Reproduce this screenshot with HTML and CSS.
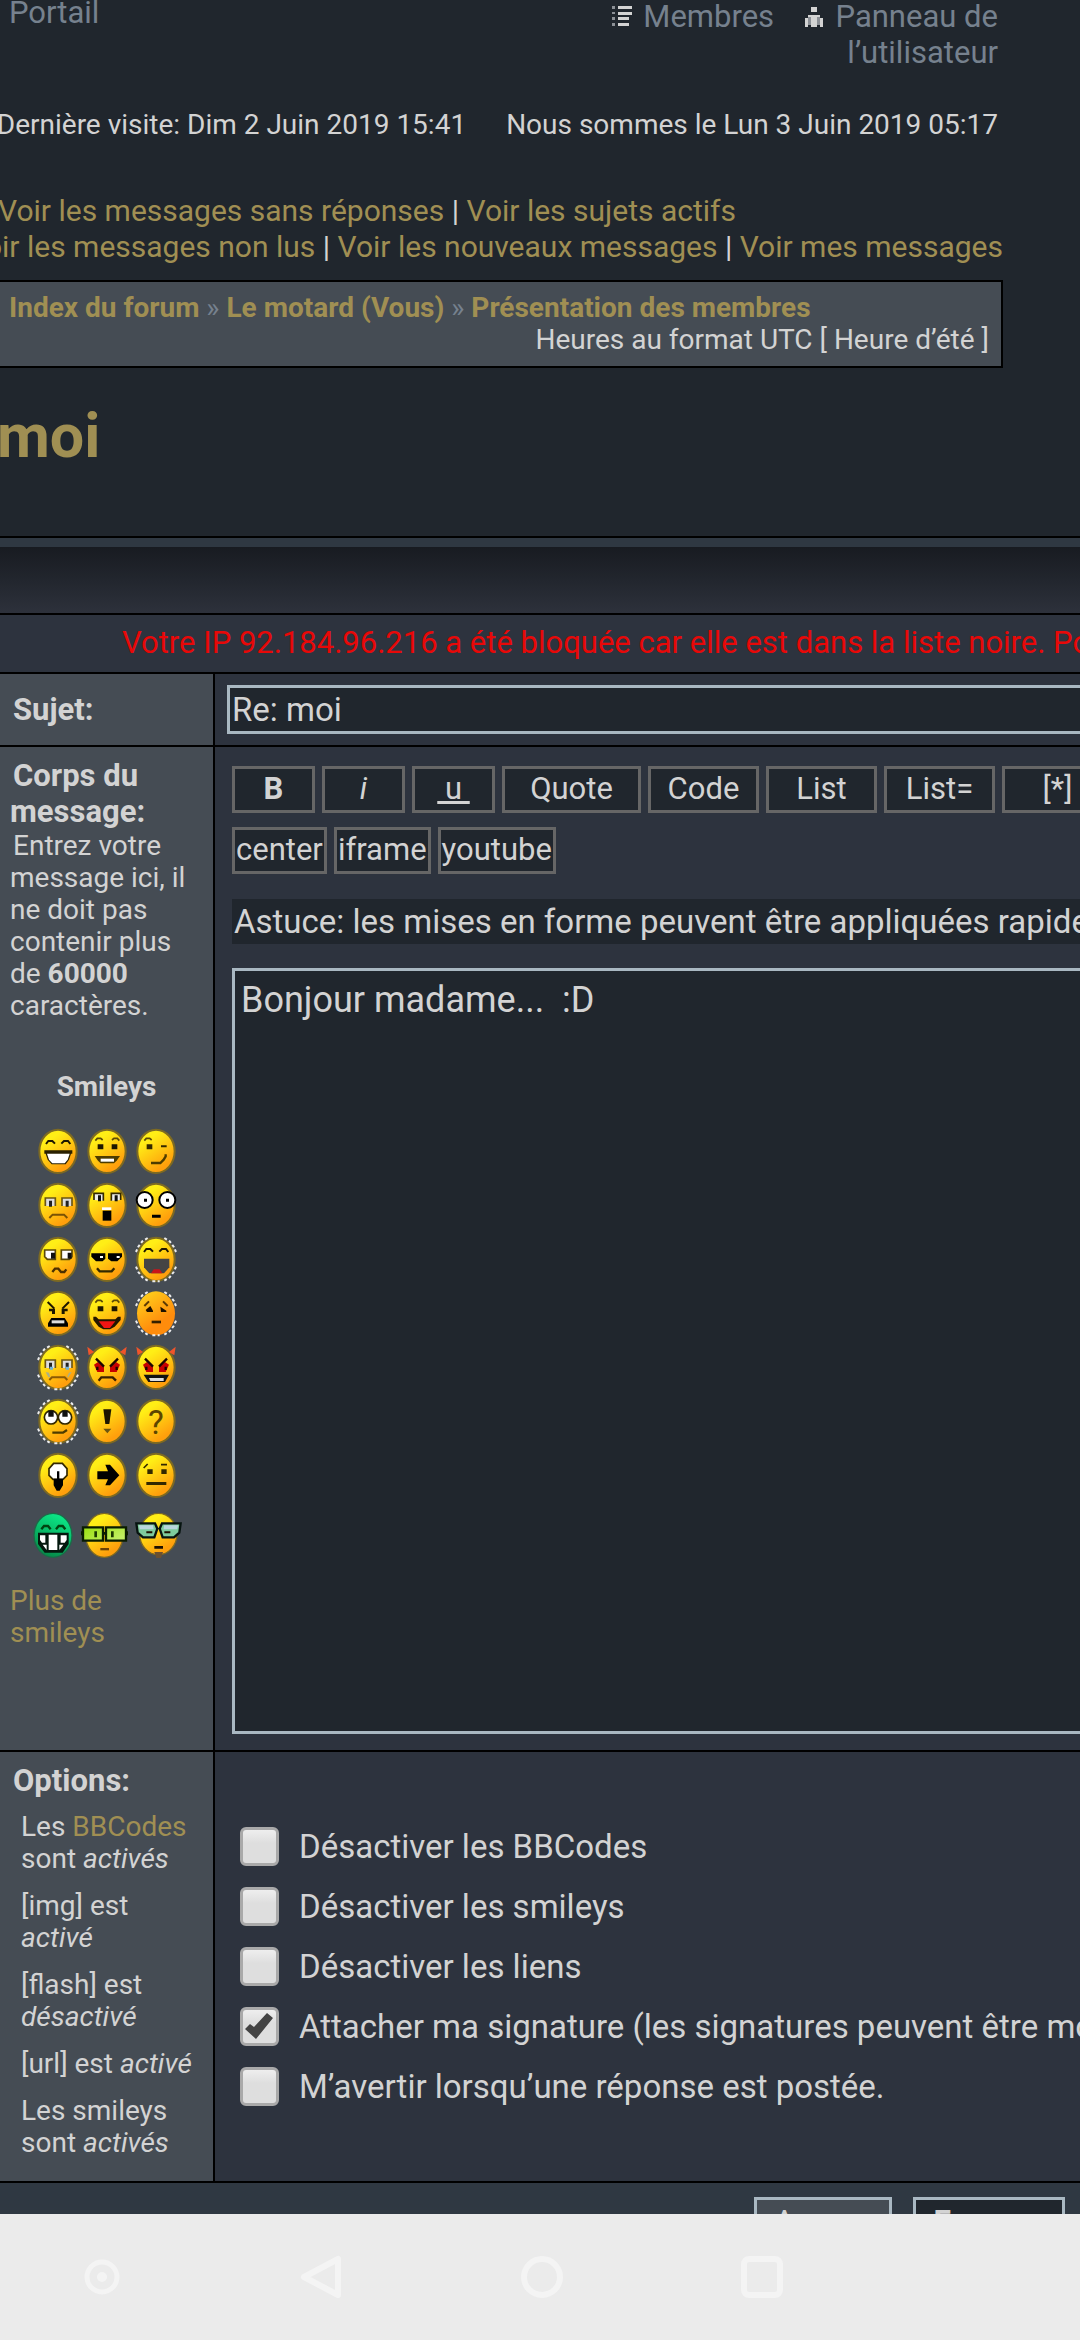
FILE: index.html
```
<!DOCTYPE html>
<html lang="fr">
	<head>
		<meta charset="utf-8">
		<meta name="viewport" content="width=device-width, initial-scale=1">
		<title>Répondre - moi</title>
		<link rel="stylesheet" href="styles.css">
	</head>
	<body>
		<!-- shared shapes for the smileys -->
		<svg class="defs" aria-hidden="true">
			<defs>
				<linearGradient id="skin" x1="0.2" y1="0" x2="0.8" y2="1">
					<stop offset="0.2" stop-color="#ffee16"/>
					<stop offset="0.85" stop-color="#ff9f0c"/>
				</linearGradient>
				<linearGradient id="sad" x1="0.2" y1="0" x2="0.8" y2="1">
					<stop offset="0" stop-color="#ffd21c"/>
					<stop offset="0.7" stop-color="#ff8c0c"/>
				</linearGradient>
				<linearGradient id="green" x1="0.8" y1="0" x2="0.4" y2="1">
					<stop offset="0" stop-color="#0cef8c"/>
					<stop offset="1" stop-color="#058a48"/>
				</linearGradient>
				<linearGradient id="lens" x1="0" y1="0" x2="1" y2="0.6">
					<stop offset="0" stop-color="#9adf10"/>
					<stop offset="1" stop-color="#c2ef62"/>
				</linearGradient>
				<g id="face">
					<ellipse cx="63" cy="70" rx="56" ry="65" fill="url(#skin)" stroke="#7d6a22" stroke-width="6"/>
				</g>
				<g id="halo">
					<path d="M38 6L22 16 10 32 3 48M88 6l16 10 12 16 7 16M3 92l7 16 12 16 16 10M123 92l-7 16-12 16-16 10M52 136h22" fill="none" stroke="#eee" stroke-width="6" stroke-dasharray="9 7"/>
				</g>
				<g id="brows" fill="none" stroke="#5c4a06" stroke-width="5">
					<path d="M28 38l6-7h10l6 5M78 36l6-5h10l6 7"/>
				</g>
				<g id="eyes" fill="#1d1600">
					<path d="M35 49h17v15h-17zM77 49h17v15h-17z"/>
				</g>
				<g id="arcs" fill="none" stroke="#1d1600" stroke-width="6">
					<path d="M27 48l7-9h12l8 8M73 47l8-8h12l7 9"/>
				</g>
				<g id="specs">
					<path d="M25 72V48h30v24M75 72V48h30v24" fill="#ddd" stroke="#6b5512" stroke-width="5"/>
					<path d="M36 56h9v18h-9zM86 56h9v18h-9z" fill="#222"/>
				</g>
				<g id="devil">
					<path d="M8 34L4 8l20 16zM118 34l4-26-20 16z" fill="#f0542a"/>
					<path d="M24 62l12-8 18 16v14H34zM102 62l-12-8-18 16v14h20z" fill="#c80000"/>
					<path d="M30 44l24 24M96 44L72 68M34 68v10M92 68v10" stroke="#1d0600" stroke-width="7"/>
				</g>
			</defs>
		</svg>

		<div id="page">
			<div id="header">
				<div class="menu">
					<a class="portal" href="#">Portail</a>
					<div class="user">
						<a href="#"><svg class="icon" viewBox="0 0 20 22"><path d="M0 1h3v3H0zM0 7h3v2H0zM0 12h3v3H0zM0 18h3v3H0z" fill="#8c9096"/><path d="M6 1h14v3H6zM6 7h14v3H6zM6 12h11v3H6zM6 18h11v3H6z" fill="#d3d3d3"/></svg> Membres</a>
						<a class="panel" href="#"><svg class="icon" viewBox="0 0 20 22"><path d="M7 2h6v5H7zM4 10h12v2H4zM1 13h3v9H1zM16 13h3v9h-3zM7 12h6v10H7z" fill="#d3d3d3"/><path d="M4 12h3v8H4zM13 12h3v8h-3z" fill="#8c9096"/></svg> Panneau de l’utilisateur</a>
					</div>
				</div>
				<div class="dates">
					<span>Dernière visite: Dim 2 Juin 2019 15:41</span>
					<span>Nous sommes le Lun 3 Juin 2019 05:17</span>
				</div>
				<div class="search">
					<div><a href="#">Voir les messages sans réponses</a> | <a href="#">Voir les sujets actifs</a></div>
					<div class="right"><a href="#">Voir les messages non lus</a> | <a href="#">Voir les nouveaux messages</a> | <a href="#">Voir mes messages</a></div>
				</div>
				<div class="breadcrumbs">
					<div class="path"><a href="#">Index du forum</a> » <a href="#">Le motard (Vous)</a> » <a href="#">Présentation des membres</a></div>
					<div class="timezone">Heures au format UTC [ Heure d’été ]</div>
				</div>
				<h2><a href="#">moi</a></h2>
			</div>

			<form id="postform" action="#" method="post">
				<div class="cap"></div>
				<div class="error">Votre IP 92.184.96.216 a été bloquée car elle est dans la liste noire. Pour</div>

				<div class="row">
					<div class="row1 middle"><label class="title" for="subject">Sujet:</label></div>
					<div class="row2 subject"><input id="subject" type="text" value="Re: moi"></div>
				</div>

				<div class="row">
					<div class="row1">
						<label class="title" for="message">Corps du message:</label>
						<div class="explain">Entrez votre message ici, il ne doit pas contenir plus de <b>60000</b> caractères.</div>
						<div class="smileys">
							<b>Smileys</b>
							<div class="line">
								<svg viewBox="0 0 126 141"><use href="#face"/><use href="#arcs"/><path d="M22 67h84v10h-4l-6 18-10 14H44L32 95l-6-18h-4z" fill="#2a2000"/><path d="M30 77h68l-6 18-9 11H46l-10-11z" fill="#fff"/></svg>
								<svg viewBox="0 0 126 141"><use href="#face"/><use href="#brows"/><use href="#eyes"/><path d="M26 84h76l-10 14-8 8H44l-8-8z" fill="#4d3c00"/><path d="M44 92h40v9H44z" fill="#fff"/></svg>
								<svg viewBox="0 0 126 141"><use href="#face"/><path d="M28 38l6-7h10l6 5" fill="none" stroke="#5c4a06" stroke-width="5"/><path d="M35 49h17v15H35zM78 52h17v6H78z" fill="#332800"/><path d="M48 105h28l10-10 6-10v-6" fill="none" stroke="#4d3c00" stroke-width="7"/></svg>
							</div>
							<div class="line">
								<svg viewBox="0 0 126 141"><use href="#face"/><use href="#specs"/><path d="M37 108l10-10h34l10 10" fill="none" stroke="#7a5205" stroke-width="6"/></svg>
								<svg viewBox="0 0 126 141"><use href="#face"/><path d="M24 54V34h28v22M76 56V34h28v20" fill="#eee" stroke="#332800" stroke-width="5"/><path d="M36 40h9v18h-9zM86 40h9v18h-9z" fill="#111"/><path d="M48 76h28v8H48z" fill="#fff"/><path d="M50 86h26v30H50z" fill="#000"/></svg>
								<svg viewBox="0 0 126 141"><use href="#face"/><circle cx="29" cy="54" r="24" fill="#fff" stroke="#000" stroke-width="6"/><circle cx="97" cy="54" r="24" fill="#fff" stroke="#000" stroke-width="6"/><path d="M27 50h9v9h-9zM93 50h9v9h-9zM51 98h26v9H51z" fill="#000"/></svg>
							</div>
							<div class="line">
								<svg viewBox="0 0 126 141"><use href="#face"/><path d="M23 42h32v28H31l-8-8zM73 42h32v20l-8 8H73z" fill="#fff" stroke="#5c4a06" stroke-width="5"/><path d="M42 50h12v18H42zM92 50h12v18H92z" fill="#111"/><path d="M46 108l8-10h10l8 10h10l6-8" fill="none" stroke="#4d3000" stroke-width="7"/></svg>
								<svg viewBox="0 0 126 141"><use href="#face"/><path d="M16 52h42v16l-8 8H30L16 62zM66 52h42v10L94 76H76l-10-8z" fill="#000"/><path d="M42 60h9v6h-9zM92 60h9v6h-9z" fill="#fff"/><path d="M33 97l8 9h36l8-9" fill="none" stroke="#332800" stroke-width="7"/></svg>
								<svg viewBox="0 0 126 141"><use href="#face"/><use href="#halo"/><use href="#arcs"/><path d="M27 68h76v26l-16 18H43L27 94z" fill="#444"/><path d="M48 112l8-12h18l8 12z" fill="#c8141a"/></svg>
							</div>
							<div class="line">
								<svg viewBox="0 0 126 141"><use href="#face"/><path d="M32 36l20 20M96 36L76 56" stroke="#1d1600" stroke-width="6"/><path d="M36 56h18v16h-9v-8h-9zM74 56h18v8h-9v8h-9z" fill="#1d1600"/><path d="M43 84h40l10 16v10H33v-10z" fill="#000"/><path d="M44 91h38v9H44z" fill="#ddd"/></svg>
								<svg viewBox="0 0 126 141"><use href="#face"/><use href="#brows"/><use href="#eyes"/><path d="M22 80h8l8 8h50l8-8h8v10l-18 20-14 8H52l-14-8-16-20z" fill="#221600"/><path d="M38 94h50l-16 20H54z" fill="#f01414"/></svg>
								<svg viewBox="0 0 126 141"><ellipse cx="63" cy="70" rx="57" ry="66" fill="url(#sad)"/><use href="#halo"/><path d="M28 48l14-14M84 34l14 14" stroke="#5c3a06" stroke-width="6"/><path d="M32 60l14-12 8 14v4H36zM76 50l18 12v4H78z" fill="#1d1000"/><path d="M50 92h28v8H50z" fill="#332000"/></svg>
							</div>
							<div class="line">
								<svg viewBox="0 0 126 141"><use href="#face"/><use href="#halo"/><use href="#specs"/><path d="M38 68h10v9H38zM86 68h10v9H86z" fill="#6fb2d6"/><path d="M26 84l8 16h6l-4-14zM104 84l-10 16h-4l6-14z" fill="#a9b08a"/><path d="M37 108l8-8h38l8 8" fill="none" stroke="#8a5a05" stroke-width="6"/></svg>
								<svg viewBox="0 0 126 141"><use href="#face"/><use href="#devil"/><path d="M38 110l8-10h34l10 10" fill="none" stroke="#3a2000" stroke-width="7"/></svg>
								<svg viewBox="0 0 126 141"><use href="#face"/><use href="#devil"/><path d="M26 92h76l-12 22H40z" fill="#111"/><path d="M42 102h44v9H46z" fill="#ddd"/></svg>
							</div>
							<div class="line">
								<svg viewBox="0 0 126 141"><use href="#face"/><use href="#halo"/><circle cx="42" cy="58" r="20" fill="#fff" stroke="#332800" stroke-width="5"/><circle cx="84" cy="58" r="20" fill="#fff" stroke="#332800" stroke-width="5"/><path d="M34 38h16v18H34zM76 38h16v18H76z" fill="#111"/><path d="M46 104h32l12-8" fill="none" stroke="#4d3c00" stroke-width="7"/></svg>
								<svg viewBox="0 0 126 141"><use href="#face"/><path d="M52 34h24l-6 44H58z" fill="#1d1600"/><path d="M52 92h24L64 106z" fill="#6b5512"/></svg>
								<svg viewBox="0 0 126 141"><use href="#face"/><text class="mark" x="63" y="108">?</text></svg>
							</div>
							<div class="line">
								<svg viewBox="0 0 126 141"><use href="#face"/><path d="M50 34h26l14 16v20L78 82H48L36 70V50z" fill="#fff" stroke="#332800" stroke-width="5"/><path d="M60 58h7v22h11v20l-10 16h-9l-9-16V80h10z" fill="#000"/></svg>
								<svg viewBox="0 0 126 141"><use href="#face"/><path d="M34 58h32l-8-20h14l28 32-28 30H58l8-18H34z" fill="#000"/></svg>
								<svg viewBox="0 0 126 141"><use href="#face"/><path d="M26 48l12-12M78 38h18" stroke="#332800" stroke-width="5"/><path d="M37 52h16v14H37zM79 52h16v14H79zM34 90h60v9H34z" fill="#332800"/></svg>
							</div>
							<div class="line last">
								<svg viewBox="0 0 126 141"><ellipse cx="63" cy="70" rx="57" ry="66" fill="url(#green)" stroke="#1c6a48" stroke-width="4"/><path d="M28 52l8-10h12l8 10M72 52l8-10h12l8 10" fill="none" stroke="#041" stroke-width="7"/><path d="M18 62h92v34l-18 26H38L18 96z" fill="#04180e"/><path d="M24 70h16v22H30l-6-8zM50 68h26v46H50zM86 70h18v14l-6 8H86zM32 98h12v16zM82 98h12l-12 16z" fill="#fff"/></svg>
								<svg class="wide" viewBox="0 0 141 141"><ellipse cx="70" cy="70" rx="56" ry="66" fill="url(#skin)" stroke="#7d6a22" stroke-width="4"/><path d="M6 46h60v40H6zM75 46h60v40H75z" fill="url(#lens)" stroke="#0a1c00" stroke-width="7"/><path d="M0 58h8v12H0zM66 60h9v8h-9zM133 58h8v12h-8z" fill="#0a1c00"/><path d="M40 58h8v18h-8zM90 58h8v18h-8z" fill="#1c3a00"/><path d="M58 108h26v7H58z" fill="#6b4205"/></svg>
								<svg class="wide" viewBox="0 0 141 141"><ellipse cx="70" cy="66" rx="56" ry="62" fill="url(#skin)" stroke="#7d6a22" stroke-width="4"/><path d="M4 34h56l7 16-9 26H24L8 62zM137 34H81l-7 16 9 26h34l16-14z" fill="#7ecb9c" stroke="#071410" stroke-width="7"/><path d="M12 40h42l2 12H14zM87 40h42l-2 12H86z" fill="#b9d6dc"/><path d="M34 58h18v6H34zM88 58h18v6H88zM58 102h26v8H58z" fill="#1d1000"/><path d="M58 120h26l-6 18H64z" fill="#6b5030"/></svg>
							</div>
						</div>
						<div class="more"><a href="#">Plus de smileys</a></div>
					</div>
					<div class="row2 editor">
						<div class="buttons">
							<button type="button" class="s"><b>B</b></button>
							<button type="button" class="s"><i>i</i></button>
							<button type="button" class="s"><u> u </u></button>
							<button type="button" class="l">Quote</button>
							<button type="button" class="m">Code</button>
							<button type="button" class="m">List</button>
							<button type="button" class="m">List=</button>
							<button type="button" class="m">[*]</button>
						</div>
						<div class="buttons">
							<button type="button">center</button>
							<button type="button">iframe</button>
							<button type="button">youtube</button>
						</div>
						<input class="helpline" type="text" readonly aria-label="Astuce" value="Astuce: les mises en forme peuvent être appliquées rapidement au texte sélectionné.">
						<textarea id="message">Bonjour madame...  :D</textarea>
					</div>
				</div>

				<div class="row">
					<div class="row1">
						<b class="title">Options:</b>
						<ul class="status">
							<li>Les <a href="#">BBCodes</a> sont <em>activés</em></li>
							<li>[img] est <em>activé</em></li>
							<li>[flash] est <em>désactivé</em></li>
							<li>[url] est <em>activé</em></li>
							<li>Les smileys sont <em>activés</em></li>
						</ul>
					</div>
					<div class="row2 options">
						<label><input type="checkbox"> Désactiver les BBCodes</label>
						<label><input type="checkbox"> Désactiver les smileys</label>
						<label><input type="checkbox"> Désactiver les liens</label>
						<label><input type="checkbox" checked> Attacher ma signature (les signatures peuvent être modifiées</label>
						<label><input type="checkbox"> M’avertir lorsqu’une réponse est postée.</label>
					</div>
				</div>

				<div class="submit">
					<button type="button" class="preview">Aperçu</button>
					<button type="submit" class="send">Envoyer</button>
				</div>
			</form>
		</div>

		<div id="navbar">
			<svg viewBox="0 0 44 44"><circle cx="22" cy="22" r="15" stroke-width="5"/><circle class="dot" cx="22" cy="22" r="5"/></svg>
			<svg viewBox="0 0 44 44"><path d="M38 4v36L4 22z" stroke-width="6" stroke-linejoin="round"/></svg>
			<svg viewBox="0 0 44 44"><circle cx="22" cy="22" r="18" stroke-width="6"/></svg>
			<svg viewBox="0 0 44 44"><rect x="4" y="4" width="36" height="36" rx="5" stroke-width="6"/></svg>
		</div>
	</body>
</html>
```

FILE: styles.css
```
		* {
			box-sizing: border-box;
		}
		body {
			margin: 0;
			font-family: Roboto, "Open Sans", sans-serif;
			font-size: 28px;
			line-height: 32px;
			color: #d3d3d3;
			background-color: #20262d;
		}
		a {
			color: #a08f53;
			text-decoration: none;
		}
		button, input, textarea {
			font-family: inherit;
			color: #d3d3d3;
			background-color: #20262d;
			border-radius: 0;
			margin: 0;
		}
		.defs {
			position: absolute;
			width: 0;
			height: 0;
		}
		#page {
			height: 100vh;
			overflow: hidden;
		}

		/* header */
		#header {
			margin: -5px 77px 64px 0;
			padding-top: 1px;
		}
		.menu {
			display: flex;
			justify-content: space-between;
			font-size: 31px;
			line-height: 36px;
			padding: 0 5px 0 9px;
			margin-top: -1px;
		}
		.menu a {
			color: #76818e;
		}
		.user {
			width: 400px;
			padding-top: 4px;
			text-align: right;
		}
		.panel {
			margin-left: 22px;
		}
		.icon {
			width: 20px;
			height: 22px;
			margin-right: 4px;
		}
		.dates {
			display: flex;
			justify-content: flex-end;
			gap: 40px;
			padding-right: 5px;
			margin-top: 38px;
			white-space: nowrap;
		}
		.search {
			font-size: 30px;
			line-height: 36px;
			margin: 52px 0 15px -2px;
			white-space: nowrap;
		}
		.search .right {
			display: flex;
			justify-content: flex-end;
			white-space: pre;
		}
		.breadcrumbs {
			padding: 10px 12px 10px 9px;
			background-color: #454c54;
			border: 2px solid #000;
			border-left: 0;
		}
		.path {
			color: #76818e;
		}
		.path a {
			font-weight: bold;
		}
		.timezone {
			text-align: right;
		}
		h2 {
			margin: 32px 0 0 -3px;
			font-size: 61px;
			line-height: 72px;
		}

		/* form rows */
		#postform {
			border-top: 2px solid #000;
		}
		.cap {
			height: 77px;
			border-top: 9px solid #2f3842;
			border-bottom: 2px solid #000;
			background: linear-gradient(#181b21, #22262e 50%, #2d313b);
		}
		.error {
			padding: 10px 0 11px 122px;
			font-size: 31px;
			line-height: 36px;
			color: #e80808;
			background-color: #2d333e;
			border-bottom: 2px solid #000;
			white-space: nowrap;
			overflow: hidden;
		}
		.row {
			display: flex;
			border-bottom: 2px solid #000;
		}
		.row1 {
			flex: none;
			width: 215px;
			padding: 11px 16px 22px 10px;
			background-color: #454c54;
			border-right: 2px solid #000;
		}
		.middle {
			display: flex;
			align-items: center;
			padding-top: 0;
			padding-bottom: 0;
		}
		.row2 {
			flex: 1;
			min-width: 0;
			overflow: hidden;
			background-color: #2d333e;
		}
		.title {
			font-size: 31px;
			line-height: 36px;
			font-weight: bold;
			padding-left: 3px;
		}
		.explain {
			text-indent: 3px;
		}
		.subject {
			padding: 11px 0 11px 12px;
		}
		#subject {
			display: block;
			width: 110%;
			height: 49px;
			padding: 0 2px;
			font-size: 33px;
			border: 3px solid #a9b8c2;
		}

		/* smileys */
		.smileys {
			margin: 49px -16px 26px -10px;
			text-align: center;
		}
		.smileys b {
			display: block;
			margin-bottom: 25px;
		}
		.line {
			display: flex;
			justify-content: center;
			gap: 7px;
			margin-bottom: 7px;
		}
		.line svg {
			width: 42px;
			height: 47px;
		}
		.line .wide {
			width: 47px;
		}
		.last {
			padding-top: 6px;
		}
		.mark {
			font-family: Roboto, sans-serif;
			font-size: 100px;
			text-anchor: middle;
			fill: #5c4600;
		}

		/* editor */
		.editor {
			padding: 19px 0 16px 17px;
		}
		.buttons {
			display: flex;
			gap: 7px;
			margin-bottom: 14px;
		}
		.buttons button {
			flex: none;
			height: 47px;
			padding: 0 1px 2px;
			font-size: 31px;
			line-height: 36px;
			white-space: pre;
			border: 3px solid #666;
		}
		.buttons .s {
			width: 83px;
		}
		.buttons .m {
			width: 111px;
		}
		.buttons .l {
			width: 139px;
		}
		.helpline {
			display: block;
			width: 110%;
			height: 45px;
			margin: 25px 0 24px;
			padding: 0 2px;
			font-size: 33px;
			border: 0;
		}
		#message {
			display: block;
			width: 110%;
			height: 766px;
			padding: 9px 6px;
			font-size: 36px;
			line-height: 40px;
			border: 3px solid #a9b8c2;
			resize: none;
		}

		/* options */
		.status {
			margin: 12px 0 0;
			padding: 0 0 0 11px;
			list-style: none;
		}
		.status li + li {
			margin-top: 15px;
		}
		.options {
			display: flex;
			flex-direction: column;
			gap: 21px;
			padding: 75px 0 0 25px;
			font-size: 33px;
			white-space: nowrap;
		}
		.options label {
			display: flex;
			align-items: center;
			gap: 20px;
			height: 39px;
		}
		.options input {
			appearance: none;
			flex: none;
			width: 39px;
			height: 39px;
			border: 3px solid #a9a9a9;
			border-radius: 6px;
			background: linear-gradient(#eee, #dedede 40%);
		}
		.options input:checked::before {
			content: "";
			display: block;
			width: 33px;
			height: 33px;
			background-color: #444;
			clip-path: polygon(2px 19px, 7px 14px, 11px 17px, 24px 3px, 30px 8px, 13px 29px);
		}
		.submit {
			display: flex;
			justify-content: flex-end;
			gap: 21px;
			padding: 14px 15px 14px 0;
			background-color: #2f3842;
		}
		.submit button {
			height: 48px;
			padding: 0 16px;
			font-size: 31px;
			border: 3px solid #a9b8c2;
		}
		.submit .preview {
			width: 138px;
			background-color: #454c54;
		}
		.submit .send {
			width: 152px;
			font-weight: bold;
		}

		/* phone navigation bar */
		#navbar {
			position: fixed;
			left: 0;
			right: 0;
			bottom: 0;
			height: 126px;
			display: flex;
			align-items: center;
			gap: 176px;
			padding-left: 80px;
			background-color: #ebebeb;
		}
		#navbar svg {
			width: 44px;
			height: 44px;
			fill: none;
			stroke: #f4f4f4;
		}
		#navbar .dot {
			fill: #f4f4f4;
			stroke: none;
		}
```
